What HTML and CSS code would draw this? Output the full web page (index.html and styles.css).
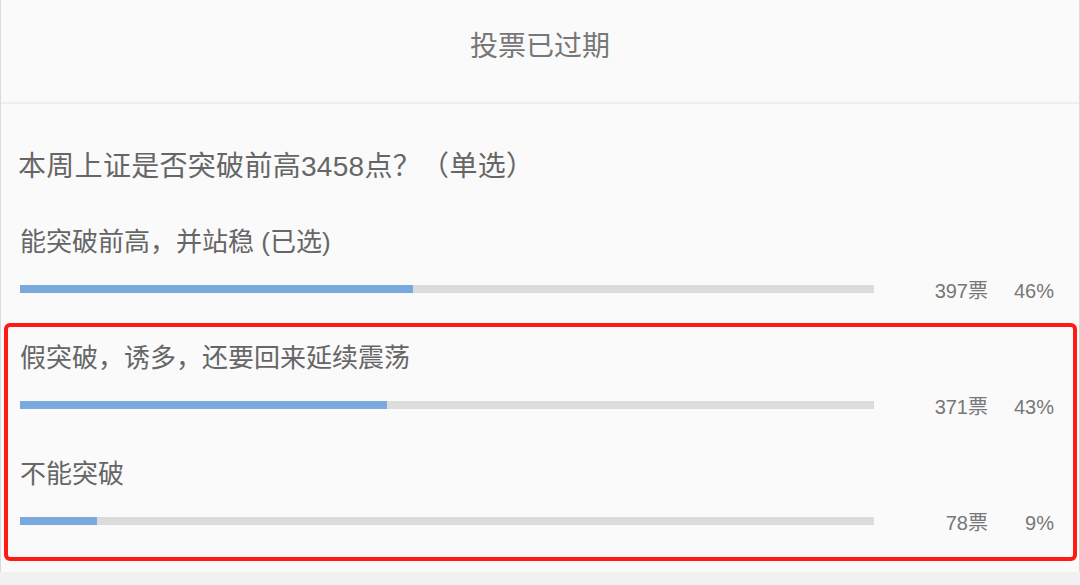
FILE: index.html
```html
<!DOCTYPE html>
<html>
<head>
  <meta charset="UTF-8">
  <meta name="viewport" content="width=device-width, initial-scale=1.0"/>
  <title>投票</title>
  <link rel="stylesheet" href="styles.css">
</head>
<body>
  <div class="card">
    <div class="head">投票已过期</div>

    <div class="poll">
      <div class="question">本周上证是否突破前高3458点？（单选）</div>

      <div class="option">
        <div class="label">能突破前高，并站稳 (已选)</div>
        <div class="row">
          <div class="bar"><div class="fill" style="width: 46%"></div></div>
          <div class="count">397票</div>
          <div class="pct">46%</div>
        </div>
      </div>

      <div class="mark">
        <div class="option">
          <div class="label">假突破，诱多，还要回来延续震荡</div>
          <div class="row">
            <div class="bar"><div class="fill" style="width: 43%"></div></div>
            <div class="count">371票</div>
            <div class="pct">43%</div>
          </div>
        </div>

        <div class="option">
          <div class="label">不能突破</div>
          <div class="row">
            <div class="bar"><div class="fill" style="width: 9%"></div></div>
            <div class="count">78票</div>
            <div class="pct">9%</div>
          </div>
        </div>
      </div>
    </div>
  </div>
</body>
</html>
```

FILE: styles.css
```css
body {
  margin: 0;
  background: #f1f1f1;
  font-family: "Liberation Sans", "Noto Sans CJK SC", sans-serif;
  color: #666;
}
.card {
  background: #fafafa;
  border-left: 1px solid #dadada;
  border-right: 1px solid #dadada;
  padding-bottom: 11px;
}
.head {
  height: 102px;
  line-height: 94px;
  text-align: center;
  font-size: 28px;
  color: #777;
  border-bottom: 2px solid #eeeeee;
}
.poll {
  padding: 43px 25px 0 19px;
}
.question {
  font-size: 28px;
  line-height: 40px;
  margin-left: -2px;
  letter-spacing: 0.3px;
}
.option .label {
  font-size: 26px;
  line-height: 36px;
}
.poll > .option {
  margin-top: 37px;
}
.row {
  display: flex;
  align-items: center;
  height: 24px;
  margin-top: 17px;
}
.bar {
  flex: 1;
  height: 8px;
  background: #dcdcdc;
}
.fill {
  height: 100%;
  background: #79a9dd;
}
.count, .pct {
  font-size: 20px;
  line-height: 24px;
  padding-top: 3px;
  color: #777;
  text-align: right;
}
.count {
  width: 114px;
}
.pct {
  width: 66px;
}
.mark {
  margin: 22px -23px 0 -16px;
  padding: 13px 19px 24px 12px;
  border: 4px solid #ff1b14;
  border-radius: 6px;
}
.mark .option + .option {
  margin-top: 39px;
}
```
